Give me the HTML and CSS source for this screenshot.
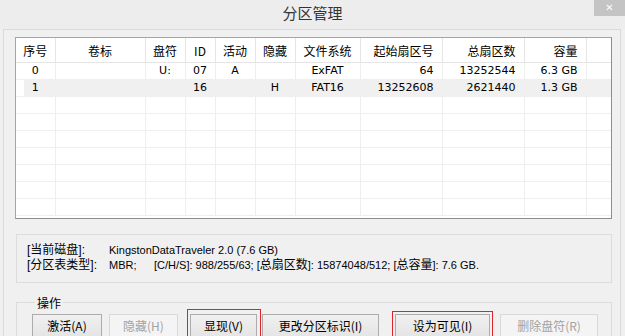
FILE: index.html
```html
<!DOCTYPE html>
<html lang="zh-CN">
<head>
    <meta charset="UTF-8">
    <meta name="viewport" content="width=device-width, initial-scale=1.0">
    <title>分区管理</title>
    <link rel="stylesheet" href="styles.css">
</head>
<body>

    <div class="window">
        <div class="titlebar">
            <span></span>
            <span class="title">分区管理</span>
            <span class="close">&#x2715;</span>
        </div>

        <div class="client">
            <div class="list">
                <table class="parts">
                    <colgroup>
                        <col class="c-no">
                        <col class="c-label">
                        <col class="c-drive">
                        <col class="c-id">
                        <col class="c-act">
                        <col class="c-hide">
                        <col class="c-fs">
                        <col class="c-start">
                        <col class="c-total">
                        <col class="c-size">
                        <col>
                    </colgroup>
                    <thead>
                        <tr>
                            <th>序号</th>
                            <th>卷标</th>
                            <th>盘符</th>
                            <th>ID</th>
                            <th>活动</th>
                            <th>隐藏</th>
                            <th>文件系统</th>
                            <th class="num">起始扇区号</th>
                            <th class="num">总扇区数</th>
                            <th class="num">容量</th>
                            <th></th>
                        </tr>
                    </thead>
                    <tbody>
                        <tr>
                            <td>0</td>
                            <td></td>
                            <td>U:</td>
                            <td>07</td>
                            <td>A</td>
                            <td></td>
                            <td>ExFAT</td>
                            <td class="num">64</td>
                            <td class="num">13252544</td>
                            <td class="num">6.3 GB</td>
                            <td></td>
                        </tr>
                        <tr class="selected">
                            <td>1</td>
                            <td></td>
                            <td></td>
                            <td>16</td>
                            <td></td>
                            <td>H</td>
                            <td>FAT16</td>
                            <td class="num">13252608</td>
                            <td class="num">2621440</td>
                            <td class="num">1.3 GB</td>
                            <td></td>
                        </tr>
                        <tr><td></td><td></td><td></td><td></td><td></td><td></td><td></td><td></td><td></td><td></td><td></td></tr>
                        <tr><td></td><td></td><td></td><td></td><td></td><td></td><td></td><td></td><td></td><td></td><td></td></tr>
                        <tr><td></td><td></td><td></td><td></td><td></td><td></td><td></td><td></td><td></td><td></td><td></td></tr>
                        <tr><td></td><td></td><td></td><td></td><td></td><td></td><td></td><td></td><td></td><td></td><td></td></tr>
                        <tr><td></td><td></td><td></td><td></td><td></td><td></td><td></td><td></td><td></td><td></td><td></td></tr>
                        <tr><td></td><td></td><td></td><td></td><td></td><td></td><td></td><td></td><td></td><td></td><td></td></tr>
                        <tr><td></td><td></td><td></td><td></td><td></td><td></td><td></td><td></td><td></td><td></td><td></td></tr>
                    </tbody>
                </table>
            </div>

            <div class="info">
                <div class="info-row">
                    <span class="info-key">[当前磁盘]:</span>
                    <span>KingstonDataTraveler 2.0 (7.6 GB)</span>
                </div>
                <div class="info-row">
                    <span class="info-key">[分区表类型]:</span>
                    <span class="info-mbr">MBR;</span>
                    <span>[C/H/S]: 988/255/63; [<span class="zh">总扇区数</span>]: 15874048/512; [<span class="zh">总容量</span>]: 7.6 GB.</span>
                </div>
            </div>

            <fieldset class="ops">
                <legend>操作</legend>
                <div class="buttons">
                    <button class="btn w-act">激活(A)</button>
                    <button class="btn w-hide" disabled>隐藏(H)</button>
                    <span class="mark mark-show"><button class="btn w-show">显现(V)</button></span>
                    <button class="btn w-chg">更改分区标识(I)</button>
                    <span class="mark mark-vis"><button class="btn w-vis">设为可见(I)</button></span>
                    <button class="btn w-del" disabled>删除盘符(R)</button>
                </div>
            </fieldset>
        </div>
    </div>

</body>
</html>
```

FILE: styles.css
```css
body {
    margin: 0;
    background-color: #f0f0f0;
    font-family: Tahoma, "DejaVu Sans", "Noto Sans CJK SC", sans-serif;
    font-size: 11px;
    color: #000;
}
.window {
    width: 625px;
    height: 336px;
    overflow: hidden;
}
.titlebar {
    height: 29px;
    display: grid;
    grid-template-columns: 1fr auto 1fr;
    background-color: #ededed;
}
.title {
    font-family: "Noto Sans CJK SC", sans-serif;
    font-size: 15px;
    line-height: 25px;
    color: #333;
}
.close {
    justify-self: end;
    width: 31px;
    height: 16px;
    background-color: #c4c4c4;
    color: #fff;
    font-size: 10px;
    line-height: 16px;
    text-align: center;
}
.client {
    margin-left: 3px;
    margin-right: 4px;
    border-left: 1px solid #dadada;
    border-top: 1px solid #dadada;
    border-right: 1px solid #dadada;
    padding: 7px 8px 0 11px;
    height: 320px;
}
.list {
    height: 180px;
    border: 1px solid #8e8e8e;
    border-left-color: #a5a5a5;
    border-top-color: #a5a5a5;
    background-color: #fff;
    overflow: hidden;
}
.parts {
    width: 100%;
    border-collapse: collapse;
    table-layout: fixed;
}
.c-no { width: 39px; }
.c-label { width: 90px; }
.c-drive { width: 40px; }
.c-id { width: 30px; }
.c-act { width: 40px; }
.c-hide { width: 40px; }
.c-fs { width: 65px; }
.c-start { width: 82px; }
.c-total { width: 82px; }
.c-size { width: 62px; }
.parts th {
    height: 24px;
    padding: 0 6px;
    font-family: "Noto Sans CJK SC", sans-serif;
    font-size: 12px;
    font-weight: normal;
    text-align: center;
    border-right: 1px solid #e5e5e5;
    border-bottom: 1px solid #e5e5e5;
    white-space: nowrap;
}
.parts td {
    height: 16px;
    padding: 0 6px;
    text-align: center;
    border-right: 1px solid #efefef;
    border-bottom: 1px solid #efefef;
    white-space: nowrap;
    line-height: 16px;
}
.parts th:last-child,
.parts td:last-child {
    border-right: none;
}
.parts .num {
    text-align: right;
    padding-right: 8px;
}
.parts .selected td {
    background-color: #f0f0f0;
}
.parts .selected td:first-child {
    background: linear-gradient(to right, #fff 8px, #f0f0f0 8px);
}
.info {
    margin: 15px 0 0 1px;
    height: 39px;
    border: 1px solid #dcdcdc;
    padding: 8px 0 0 10px;
    font-family: "Liberation Sans", "Noto Sans CJK SC", sans-serif;
    font-size: 11px;
}
.info-row {
    display: flex;
    height: 15px;
    line-height: 15px;
    white-space: nowrap;
}
.info-key {
    flex-shrink: 0;
    width: 82px;
    font-size: 12px;
}
.info-mbr {
    flex-shrink: 0;
    width: 45px;
}
.zh {
    font-size: 12px;
}
.ops {
    margin: 11px 0 0 1px;
    padding: 3px 0 0 15px;
    border: 1px solid #dcdcdc;
    height: 40px;
}
.ops legend {
    margin-left: 3px;
    padding: 0 2px;
    font-family: "Noto Sans CJK SC", sans-serif;
    font-size: 12px;
    line-height: 17px;
}
.buttons {
    display: flex;
    align-items: flex-start;
    gap: 7px;
}
.btn {
    height: 23px;
    padding: 0;
    border: 1px solid #acacac;
    background: linear-gradient(#f0f0f0, #e5e5e5);
    font-family: "Noto Sans CJK SC", sans-serif;
    font-size: 12px;
    color: #000;
}
.btn:disabled {
    border-color: #d9d9d9;
    background: #f4f4f4;
    color: #a3a3a3;
}
.w-act { width: 70px; }
.w-hide { width: 69px; }
.w-show { width: 67px; }
.w-chg { width: 117px; }
.w-vis { width: 95px; }
.w-del { width: 98px; }
.mark {
    display: flex;
    border-top: 1px solid #e0222b;
    border-left: 1px solid #e0222b;
    border-right: 1px solid #e0222b;
}
.mark-show {
    margin: -5px -6px 0 2px;
    padding: 4px 3px 0 2px;
}
.mark-vis {
    margin: -3px 0 0 6px;
    padding: 2px 2px 0 2px;
}
```
